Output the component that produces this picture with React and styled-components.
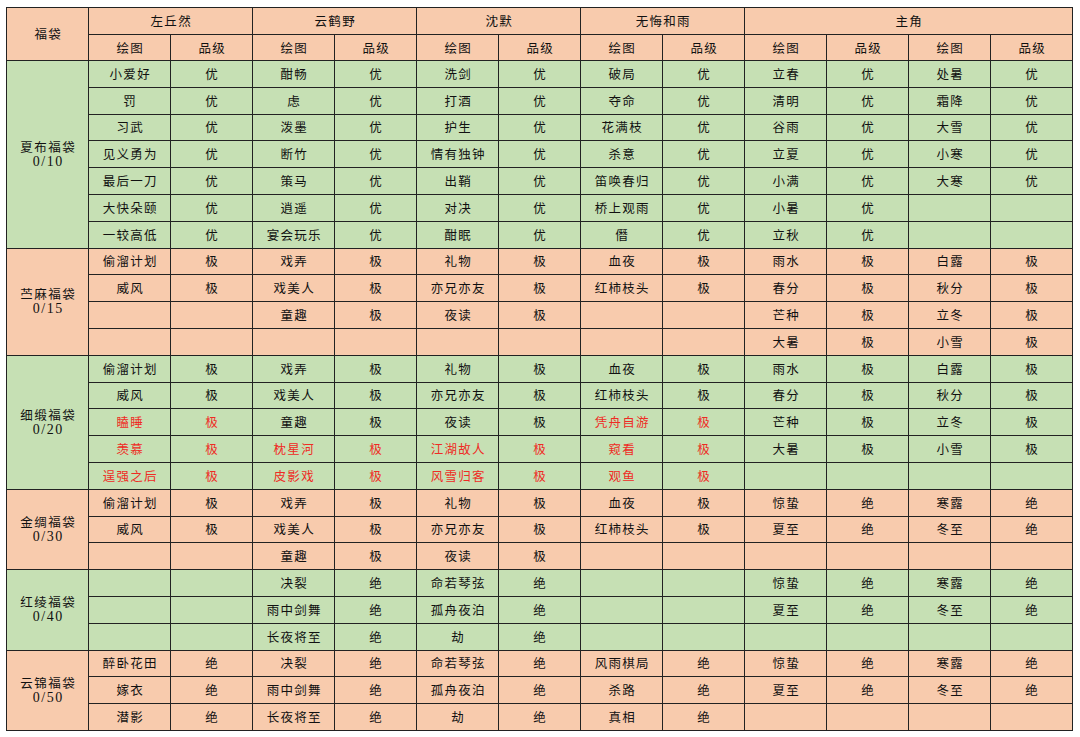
import React from 'react';
import styled, { createGlobalStyle } from 'styled-components';

const GlobalStyle = createGlobalStyle`
    html, body {
        margin: 0;
        padding: 0;
        background: #ffffff;
    }
    body {
        font-family: "Noto Sans CJK SC", "Liberation Serif", serif;
    }
`;

const COLORS = {
    orange: '#f8cbad',
    green: '#c6e0b4',
};

const Page = styled.div`
    padding: 7px 0 0 6px;
    width: 1080px;
    height: 737px;
    box-sizing: border-box;
`;

const Sheet = styled.table`
    width: 1067px;
    table-layout: fixed;
    border-collapse: collapse;
    color: #111111;
    font-size: 12.5px;
`;

const Row = styled.tr`
    height: ${ props => props.h || 26.8 }px;
    background-color: ${ props => COLORS[props.tone] || COLORS.orange };
`;

const Cell = styled.td`
    border: 1px solid #222222;
    padding: 0 0 0 ${ props => props.pad || 1.5 }px;
    text-align: center;
    vertical-align: middle;
    white-space: nowrap;
    letter-spacing: 1.3px;
    line-height: 14px;
    color: ${ props => props.red ? '#ef2b24' : 'inherit' };
`;

const HeadCell = styled(Cell).attrs({ as: 'th' })`
    font-weight: normal;
`;

const BagName = styled.div`
    letter-spacing: 1.5px;
`;

const BagCount = styled.div`
    font-family: "Liberation Serif", serif;
    font-size: 14px;
    letter-spacing: 1.5px;
    margin-top: 1px;
`;

// each row: 6 [name, grade, red?] pairs; null = empty pair
const p = (name, grade, red) => [name, grade, red];
const E = null;

const groups = [
    {
        name: '夏布福袋', count: '0/10', tone: 'green',
        rows: [
            [p('小爱好', '优'), p('酣畅', '优'), p('洗剑', '优'), p('破局', '优'), p('立春', '优'), p('处暑', '优')],
            [p('罚', '优'), p('虑', '优'), p('打酒', '优'), p('夺命', '优'), p('清明', '优'), p('霜降', '优')],
            [p('习武', '优'), p('泼墨', '优'), p('护生', '优'), p('花满枝', '优'), p('谷雨', '优'), p('大雪', '优')],
            [p('见义勇为', '优'), p('断竹', '优'), p('情有独钟', '优'), p('杀意', '优'), p('立夏', '优'), p('小寒', '优')],
            [p('最后一刀', '优'), p('策马', '优'), p('出鞘', '优'), p('笛唤春归', '优'), p('小满', '优'), p('大寒', '优')],
            [p('大快朵颐', '优'), p('逍遥', '优'), p('对决', '优'), p('桥上观雨', '优'), p('小暑', '优'), E],
            [p('一较高低', '优'), p('宴会玩乐', '优'), p('酣眠', '优'), p('僭', '优'), p('立秋', '优'), E],
        ],
    },
    {
        name: '苎麻福袋', count: '0/15', tone: 'orange',
        rows: [
            [p('偷溜计划', '极'), p('戏弄', '极'), p('礼物', '极'), p('血夜', '极'), p('雨水', '极'), p('白露', '极')],
            [p('威风', '极'), p('戏美人', '极'), p('亦兄亦友', '极'), p('红柿枝头', '极'), p('春分', '极'), p('秋分', '极')],
            [E, p('童趣', '极'), p('夜读', '极'), E, p('芒种', '极'), p('立冬', '极')],
            [E, E, E, E, p('大暑', '极'), p('小雪', '极')],
        ],
    },
    {
        name: '细缎福袋', count: '0/20', tone: 'green',
        rows: [
            [p('偷溜计划', '极'), p('戏弄', '极'), p('礼物', '极'), p('血夜', '极'), p('雨水', '极'), p('白露', '极')],
            [p('威风', '极'), p('戏美人', '极'), p('亦兄亦友', '极'), p('红柿枝头', '极'), p('春分', '极'), p('秋分', '极')],
            [p('瞌睡', '极', true), p('童趣', '极'), p('夜读', '极'), p('凭舟自游', '极', true), p('芒种', '极'), p('立冬', '极')],
            [p('羡慕', '极', true), p('枕星河', '极', true), p('江湖故人', '极', true), p('窥看', '极', true), p('大暑', '极'), p('小雪', '极')],
            [p('逞强之后', '极', true), p('皮影戏', '极', true), p('风雪归客', '极', true), p('观鱼', '极', true), E, E],
        ],
    },
    {
        name: '金绸福袋', count: '0/30', tone: 'orange',
        rows: [
            [p('偷溜计划', '极'), p('戏弄', '极'), p('礼物', '极'), p('血夜', '极'), p('惊蛰', '绝'), p('寒露', '绝')],
            [p('威风', '极'), p('戏美人', '极'), p('亦兄亦友', '极'), p('红柿枝头', '极'), p('夏至', '绝'), p('冬至', '绝')],
            [E, p('童趣', '极'), p('夜读', '极'), E, E, E],
        ],
    },
    {
        name: '红绫福袋', count: '0/40', tone: 'green',
        rows: [
            [E, p('决裂', '绝'), p('命若琴弦', '绝'), E, p('惊蛰', '绝'), p('寒露', '绝')],
            [E, p('雨中剑舞', '绝'), p('孤舟夜泊', '绝'), E, p('夏至', '绝'), p('冬至', '绝')],
            [E, p('长夜将至', '绝'), p('劫', '绝'), E, E, E],
        ],
    },
    {
        name: '云锦福袋', count: '0/50', tone: 'orange',
        rows: [
            [p('醉卧花田', '绝'), p('决裂', '绝'), p('命若琴弦', '绝'), p('风雨棋局', '绝'), p('惊蛰', '绝'), p('寒露', '绝')],
            [p('嫁衣', '绝'), p('雨中剑舞', '绝'), p('孤舟夜泊', '绝'), p('杀路', '绝'), p('夏至', '绝'), p('冬至', '绝')],
            [p('潜影', '绝'), p('长夜将至', '绝'), p('劫', '绝'), p('真相', '绝'), E, E],
        ],
    },
];

const people = ['左丘然', '云鹤野', '沈默', '无悔和雨'];

const PairCells = ({ pair }) => {
    if (!pair) {
        return (
            <>
                <Cell />
                <Cell />
            </>
        );
    }
    const [name, grade, red] = pair;
    return (
        <>
            <Cell red={red}>{name}</Cell>
            <Cell red={red}>{grade}</Cell>
        </>
    );
};

const App = () => {
    return (
        <Page>
            <GlobalStyle />
            <Sheet>
                <colgroup>
                    {Array.from({ length: 13 }).map((_, i) => <col key={i} />)}
                </colgroup>
                <thead>
                    <Row tone="orange" h={27}>
                        <HeadCell rowSpan={2}>福袋</HeadCell>
                        {people.map(name => (
                            <HeadCell key={name} colSpan={2}>{name}</HeadCell>
                        ))}
                        <HeadCell colSpan={4}>主角</HeadCell>
                    </Row>
                    <Row tone="orange" h={26}>
                        {Array.from({ length: 6 }).map((_, i) => (
                            <React.Fragment key={i}>
                                <HeadCell>绘图</HeadCell>
                                <HeadCell>品级</HeadCell>
                            </React.Fragment>
                        ))}
                    </Row>
                </thead>
                {groups.map(group => (
                    <tbody key={group.name}>
                        {group.rows.map((row, i) => (
                            <Row key={i} tone={group.tone}>
                                {i === 0 && (
                                    <Cell rowSpan={group.rows.length}>
                                        <BagName>{group.name}</BagName>
                                        <BagCount>{group.count}</BagCount>
                                    </Cell>
                                )}
                                {row.map((pair, j) => <PairCells key={j} pair={pair} />)}
                            </Row>
                        ))}
                    </tbody>
                ))}
            </Sheet>
        </Page>
    );
};

export default App;
